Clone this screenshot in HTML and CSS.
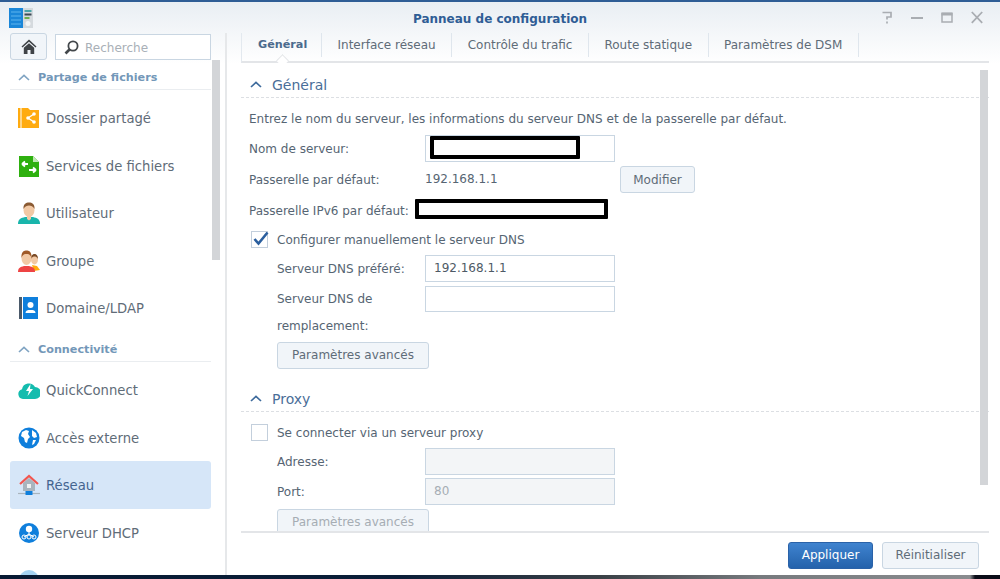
FILE: index.html
```html
<!DOCTYPE html>
<html lang="fr">
<head>
  <meta charset="UTF-8" />
  <title>Panneau de configuration</title>
  <link rel="stylesheet" href="styles.css">
</head>
<body>

<div class="window">
  <div class="titlebar">
    <svg class="app-icon" width="24" height="20" viewBox="0 0 24 20">
      <rect x="0" y="0" width="14" height="20" fill="#1a86d8"/>
      <path d="M2 4h10M2 8h10M2 12h10M2 16h10" stroke="#5cb4ee" stroke-width="1"/>
      <rect x="14" y="0" width="10" height="20" fill="#d5dade"/>
      <rect x="15.500" y="2" width="7" height="2" fill="#4aa3a8"/>
      <rect x="15.500" y="5.500" width="7" height="2" fill="#3d4a55"/>
      <rect x="15.500" y="9" width="5" height="2" fill="#6dad4e"/>
      <circle cx="19" cy="15.500" r="2.500" fill="#f4f6f7"/>
    </svg>
    <div class="title">Panneau de configuration</div>
    <div class="win-buttons">
      <svg width="12" height="13" viewBox="0 0 12 13"><path d="M1.500 1.500h8.500v4.500h-4v2.500M6 10.500v2" fill="none" stroke="#a9adb2" stroke-width="1.700"/></svg>
      <svg width="12" height="13" viewBox="0 0 12 13"><path d="M0 7h12" stroke="#a9adb2" stroke-width="2"/></svg>
      <svg width="12" height="13" viewBox="0 0 12 13"><path d="M1 2.500h10v8.500h-10z" fill="none" stroke="#a9adb2" stroke-width="1.500"/><rect x="0.500" y="1.500" width="11" height="3" fill="#a9adb2"/></svg>
      <svg width="12" height="13" viewBox="0 0 12 13"><path d="M0.800 1l10.400 10.800M11.200 1l-10.400 10.800" stroke="#a9adb2" stroke-width="1.800"/></svg>
    </div>
  </div>

  <div class="panels">
    <div class="sidebar">
      <div class="search-row">
        <div class="home-btn">
          <svg width="16" height="15" viewBox="0 0 16 15"><path d="M8 0.500L0.500 7.500l1 1L8 2.800l6.500 5.700 1-1z" fill="#3f4347"/><path d="M2.800 8.800L8 4.200l5.200 4.600V15H9.500v-4h-3v4H2.800z" fill="#3f4347"/></svg>
        </div>
        <div class="search">
          <svg width="15" height="15" viewBox="0 0 15 15"><circle cx="9" cy="6" r="4.600" fill="none" stroke="#43474b" stroke-width="1.800"/><path d="M5.500 9.500L1.500 13.500" stroke="#43474b" stroke-width="2.600"/></svg>
          <span>Recherche</span>
        </div>
      </div>

      <div class="menu">
        <div class="menu-head">
          <svg class="chev" width="12" height="7" viewBox="0 0 12 7"><path d="M1 6l5-4.700L11 6" fill="none" stroke="#7fa3c2" stroke-width="1.600"/></svg>
          Partage de fichiers
        </div>
        <div class="menu-item">
          <svg width="22" height="20" viewBox="0 0 22 20"><path d="M0 0h10l2 2h9v18H0z" fill="#ffab10"/><path d="M3 0v20" stroke="#fff" stroke-width="1"/><path d="M16 6l-6 4 6 4" fill="none" stroke="#fff" stroke-width="1.300"/><circle cx="16" cy="6" r="1.800" fill="#fff"/><circle cx="10" cy="10" r="1.800" fill="#fff"/><circle cx="16" cy="14" r="1.800" fill="#fff"/></svg>
          <span>Dossier partagé</span>
        </div>
        <div class="menu-item">
          <svg width="22" height="22" viewBox="0 0 22 22"><path d="M1 1h14l6 6v15H1z" fill="#2eb00f"/><path d="M15 1l6 6h-6z" fill="#bfe8b3"/><path d="M4 9h6M4 9l3-2.500M4 9l3 2.500M18 15h-7M18 15l-3-2.500M18 15l-3 2.500" fill="none" stroke="#fff" stroke-width="1.800"/></svg>
          <span>Services de fichiers</span>
        </div>
        <div class="menu-item">
          <svg width="22" height="22" viewBox="0 0 22 22"><path d="M0 22c0-5 3-6 7-7h8c4 1 7 2 7 7z" fill="#19b5ab"/><ellipse cx="11" cy="8" rx="5.500" ry="7" fill="#f2c9a5"/><path d="M9 13h4v4l-2 1.500L9 17z" fill="#f2c9a5"/><path d="M5.500 7C5 2 8 0.500 11 0.500S17 2 16.500 7C15 4 13 3.500 11 3.500S7 4 5.500 7z" fill="#8a5a32"/></svg>
          <span>Utilisateur</span>
        </div>
        <div class="menu-item">
          <svg width="22" height="22" viewBox="0 0 22 22"><path d="M14 15l5 1 3 4-6 1z" fill="#ffab10"/><ellipse cx="16.500" cy="9.500" rx="3.500" ry="5" fill="#f2c9a5"/><path d="M13 9c0-4 2-5 3.500-5S20 5 20 9c-1-2-2.500-2.500-3.500-2.500S14 7 13 9z" fill="#7a4b28"/><path d="M0 22c0-4 2-5 6-6h5c4 1 6 2 6 6z" fill="#ee4444"/><ellipse cx="8.500" cy="8" rx="5" ry="7" fill="#f2c9a5"/><path d="M3.500 8C3 2 6 0.500 8.500 0.500S14 2 13.500 8C12.500 4.500 10.500 4 8.500 4S4.500 4.500 3.500 8z" fill="#a05a28"/></svg>
          <span>Groupe</span>
        </div>
        <div class="menu-item">
          <svg width="22" height="22" viewBox="0 0 22 22"><rect x="1" y="0" width="3" height="22" fill="#4b5a6a"/><rect x="4" y="0" width="1" height="22" fill="#fff"/><rect x="5" y="0" width="15" height="22" fill="#0f7fdc"/><circle cx="12.500" cy="8" r="3" fill="#fff"/><path d="M7.500 16c0-2.500 2-3 5-3s5 .5 5 3z" fill="#fff"/></svg>
          <span>Domaine/LDAP</span>
        </div>
        <div class="menu-head second">
          <svg class="chev" width="12" height="7" viewBox="0 0 12 7"><path d="M1 6l5-4.700L11 6" fill="none" stroke="#7fa3c2" stroke-width="1.600"/></svg>
          Connectivité
        </div>
        <div class="menu-item">
          <svg width="22" height="18" viewBox="0 0 22 18"><path d="M5 18a5 5 0 0 1-1-9.800A7 7 0 0 1 17 6a6 6 0 0 1 0 12z" fill="#14bcae"/><path d="M12.500 3L8 10h3l-1.500 5L15 8h-3z" fill="#fff"/></svg>
          <span>QuickConnect</span>
        </div>
        <div class="menu-item">
          <svg width="22" height="22" viewBox="0 0 22 22"><circle cx="11" cy="11" r="10.500" fill="#0f7fdc"/><path d="M4 5l4-2 3 1-1 3 2 3-2 2-1 4-2-1-1-4-3-2zM14 3l4 3 1 4-3 1-2-2zM15 13l3 0-2 4-2 1z" fill="#fff"/></svg>
          <span>Accès externe</span>
        </div>
        <div class="menu-item active">
          <svg width="22" height="22" viewBox="0 0 22 22"><path d="M5 9l6-5 6 5v8H5z" fill="#a9b4bd"/><rect x="9" y="10" width="4" height="4" fill="#eef1f3"/><path d="M2 10l9-8 9 8" fill="none" stroke="#f2554f" stroke-width="2.200"/><path d="M0 19.500h22" stroke="#a9b4bd" stroke-width="1.200"/><rect x="7.500" y="17" width="7" height="4" fill="#0f7fdc"/></svg>
          <span>Réseau</span>
        </div>
        <div class="menu-item">
          <svg width="22" height="22" viewBox="0 0 22 22"><circle cx="11" cy="11" r="10" fill="#0f7fdc"/><circle cx="11" cy="7" r="3.200" fill="#fff"/><path d="M11 10v3M6 15l5-3 5 3" stroke="#fff" stroke-width="1" fill="none"/><circle cx="6" cy="15" r="2" fill="none" stroke="#fff"/><circle cx="11" cy="15" r="2" fill="none" stroke="#fff"/><circle cx="16" cy="15" r="2" fill="none" stroke="#fff"/></svg>
          <span>Serveur DHCP</span>
        </div>
        <div class="menu-item">
          <svg width="22" height="22" viewBox="0 0 22 22"><circle cx="11" cy="11" r="10" fill="#a5d3f2"/></svg>
          <span></span>
        </div>
      </div>
      <div class="scrollbar side-scroll"></div>
    </div>

    <div class="main">
      <div class="tabs">
        <div class="tab active">Général</div>
        <div class="tab">Interface réseau</div>
        <div class="tab">Contrôle du trafic</div>
        <div class="tab">Route statique</div>
        <div class="tab">Paramètres de DSM</div>
      </div>

      <div class="content">
        <div class="section-head">
          <svg width="12" height="7" viewBox="0 0 12 7"><path d="M1 6l5-4.700L11 6" fill="none" stroke="#3d6a9c" stroke-width="1.700"/></svg>
          Général
        </div>
        <p class="desc">Entrez le nom du serveur, les informations du serveur DNS et de la passerelle par défaut.</p>

        <div class="row">
          <label class="lbl">Nom de serveur:</label>
          <div class="input redacted-host"><i class="redact host-box"></i></div>
        </div>
        <div class="row">
          <label class="lbl">Passerelle par défaut:</label>
          <span class="value">192.168.1.1</span>
          <div class="btn modify">Modifier</div>
        </div>
        <div class="row ipv6">
          <label class="lbl">Passerelle IPv6 par défaut:</label>
          <i class="redact ipv6-box"></i>
        </div>
        <div class="row check-row">
          <svg class="check" width="18" height="18" viewBox="0 0 18 18"><rect x="0.500" y="0.500" width="16" height="16" fill="#fff" stroke="#c3cfdc"/><path d="M3.500 8l4 4.500L16.500 1.500" fill="none" stroke="#2a5e9e" stroke-width="2.600"/></svg>
          Configurer manuellement le serveur DNS
        </div>
        <div class="row sub">
          <label class="lbl">Serveur DNS préféré:</label>
          <div class="input">192.168.1.1</div>
        </div>
        <div class="row sub tall">
          <label class="lbl">Serveur DNS de remplacement:</label>
          <div class="input"></div>
        </div>
        <div class="row sub advanced">
          <div class="btn wide">Paramètres avancés</div>
        </div>

        <div class="section-head proxy">
          <svg width="12" height="7" viewBox="0 0 12 7"><path d="M1 6l5-4.700L11 6" fill="none" stroke="#3d6a9c" stroke-width="1.700"/></svg>
          Proxy
        </div>
        <div class="row check-row proxy-check">
          <svg class="check" width="18" height="18" viewBox="0 0 18 18"><rect x="0.500" y="0.500" width="16" height="16" fill="#fff" stroke="#c3cfdc"/></svg>
          Se connecter via un serveur proxy
        </div>
        <div class="row sub tight">
          <label class="lbl">Adresse:</label>
          <div class="input disabled"></div>
        </div>
        <div class="row sub tight2">
          <label class="lbl">Port:</label>
          <div class="input disabled">80</div>
        </div>
        <div class="row sub">
          <div class="btn wide disabled-btn">Paramètres avancés</div>
        </div>
        <div class="scrollbar main-scroll"></div>
      </div>

      <div class="footer">
        <div class="btn primary">Appliquer</div>
        <div class="btn reset">Réinitialiser</div>
      </div>
    </div>
  </div>
</div>
<div class="wallpaper"></div>

</body>
</html>
```

FILE: styles.css
```css
html, body {
  margin: 0;
  padding: 0;
  height: 579px;
  overflow: hidden;
}

body {
  font-family: "DejaVu Sans", sans-serif;
  font-size: 12px;
  color: #566573;
  background-color: #fff;
}

.window {
  height: 575px;
  display: flex;
  flex-direction: column;
  border-top: 2px solid #2f5d95;
  box-sizing: border-box;
  overflow: hidden;
  background: linear-gradient(#e9eef3 0, #fff 62px) no-repeat;
}

.wallpaper {
  height: 4px;
  background: linear-gradient(90deg, #071a33 0%, #0b1e38 40%, #3a4046 60%, #777a7e 76%, #8a8c8f 97%, #0a0d18 97.500%);
}

.titlebar {
  height: 31px;
  flex-shrink: 0;
  position: relative;
  display: flex;
  align-items: center;
  justify-content: center;
}

.app-icon {
  position: absolute;
  left: 9px;
  top: 6px;
}

.title {
  font-weight: bold;
  font-size: 12px;
  color: #2f5d95;
  margin-top: 2px;
}

.win-buttons {
  position: absolute;
  right: 17px;
  top: 9px;
  display: flex;
  gap: 18px;
}

.panels {
  flex: 1;
  display: flex;
  min-height: 0;
}

/* left menu */
.sidebar {
  width: 227px;
  flex-shrink: 0;
  position: relative;
  box-sizing: border-box;
  border-right: 2px solid #e6e8ea;
  overflow: hidden;
}

.search-row {
  display: flex;
  gap: 8px;
  padding-left: 10px;
}

.home-btn {
  width: 37px;
  height: 27px;
  display: flex;
  align-items: center;
  justify-content: center;
  border: 1px solid #c9d6e2;
  border-radius: 3px;
  background-color: #f1f5f9;
  box-sizing: border-box;
}

.search {
  width: 156px;
  height: 26px;
  margin-top: 1px;
  box-sizing: border-box;
  border: 1px solid #c9d6e2;
  background-color: #fff;
  display: flex;
  align-items: center;
  gap: 6px;
  padding: 1px 0 0 8px;
  color: #a9b0b7;
}

.menu {
  width: 201px;
  margin-left: 10px;
}

.menu-head {
  height: 30px;
  box-sizing: border-box;
  padding: 5px 0 0 8px;
  display: flex;
  align-items: center;
  gap: 8px;
  border-bottom: 1px solid #eaedf0;
  font-weight: bold;
  font-size: 11.200px;
  color: #7397b8;
  margin-bottom: 4px;
}

.menu-head.second {
  margin-top: 0.500px;
}

.menu-item {
  height: 47.500px;
  box-sizing: border-box;
  display: flex;
  align-items: center;
  font-size: 13.200px;
  color: #5f6c78;
  border-radius: 3px;
  padding: 1px 0 0 8px;
  position: relative;
}

.menu-item svg {
  width: 22px;
  flex-shrink: 0;
}

.menu-item span {
  margin-left: 6px;
  margin-top: 1px;
}

.menu-item.active {
  background-color: #d6e6f8;
  color: #44648f;
}

.scrollbar {
  position: absolute;
  width: 8px;
  background-color: #d3d5d8;
}

.side-scroll {
  left: 212px;
  top: 27px;
  height: 200px;
}

/* right panel */
.main {
  flex: 1;
  display: flex;
  flex-direction: column;
  min-width: 0;
  padding-left: 14px;
  padding-right: 11px;
}

.tabs {
  height: 30px;
  flex-shrink: 0;
  display: flex;
  box-sizing: border-box;
  border-bottom: 2px solid #e3e5e8;
  position: relative;
  border-left: 1px solid #e3e9ef;
}

.tab {
  height: 24px;
  line-height: 24px;
  padding: 0 15.500px;
  color: #5f6c78;
  border-right: 1px solid #dfe6ed;
}

.tab.active {
  width: 80px;
  box-sizing: border-box;
  font-weight: bold;
  font-size: 11.200px;
  padding: 0 0 0 16px;
  color: #4b6a8d;
  position: relative;
}

.tab.active::after {
  content: "";
  position: absolute;
  left: 36px;
  top: 23px;
  width: 8px;
  height: 8px;
  background-color: #fff;
  border-left: 1px solid #e3e5e8;
  border-top: 1px solid #e3e5e8;
  transform: rotate(45deg);
}

.content {
  flex: 1;
  min-height: 0;
  position: relative;
  overflow: hidden;
}

.main-scroll {
  right: 1px;
  top: 7px;
  height: 415px;
}

.section-head {
  height: 35px;
  box-sizing: border-box;
  padding: 13px 0 4px 9px;
  display: flex;
  align-items: center;
  gap: 10px;
  font-size: 14px;
  color: #4a6e98;
  border-bottom: 1px dashed #dcdfe3;
}

.section-head.proxy {
  margin-top: 8px;
}

.desc {
  margin: 10px 0 0 8px;
  line-height: 22px;
  height: 22px;
  white-space: nowrap;
}

.row {
  display: flex;
  align-items: center;
  height: 27px;
  margin-top: 4px;
  margin-left: 8px;
  position: relative;
  white-space: nowrap;
}

.desc + .row {
  margin-top: 5px;
}

.lbl {
  width: 176px;
  flex-shrink: 0;
}

.sub {
  margin-left: 36px;
}

.sub .lbl {
  width: 148px;
}

.check-row {
  margin-top: 2px;
  margin-left: 10px;
  gap: 8px;
}

.check-row + .sub {
  margin-top: 2px;
}

.proxy-check {
  margin-top: 7px;
}

.row.tight {
  margin-top: 2px;
}

.row.tight2 {
  margin-top: 3px;
}

.sub.tall {
  align-items: flex-start;
  height: 53px;
}

.sub.tall .lbl {
  white-space: normal;
  line-height: 27px;
  width: 130px;
  margin-right: 18px;
}

.sub.tall .input {
  height: 26px;
}

.sub.advanced {
  margin-top: 3px;
}

.input {
  width: 190px;
  height: 27px;
  box-sizing: border-box;
  border: 1px solid #c9d6e2;
  background-color: #fff;
  padding: 0 8px;
  line-height: 25px;
  color: #4e5a66;
  position: relative;
}

.input.disabled {
  background-color: #f3f5f7;
  color: #a6adb4;
}

.value {
  width: 195px;
  flex-shrink: 0;
  margin-top: -2px;
}

.btn {
  box-sizing: border-box;
  height: 27px;
  line-height: 25px;
  padding: 0 13px;
  border: 1px solid #c9d6e2;
  border-radius: 3px;
  background-color: #f1f5f9;
  color: #5f6c78;
  text-align: center;
}

.btn.wide {
  width: 152px;
  padding: 0;
}

.disabled-btn {
  color: #a6adb4;
}

.modify {
  width: 75px;
  padding: 0;
  line-height: 26px;
}

.redact {
  position: absolute;
  box-sizing: border-box;
  background-color: #fff;
  border: 4px solid #000;
  border-radius: 1px;
}

.host-box {
  left: 4px;
  top: 0;
  width: 150px;
  height: 23px;
}

.ipv6-box {
  left: 166px;
  top: 2px;
  width: 193px;
  height: 20px;
}

.footer {
  height: 44px;
  flex-shrink: 0;
  box-sizing: border-box;
  border-top: 2px solid #e3e5e8;
  padding: 9px 10px 0 0;
  display: flex;
  justify-content: flex-end;
  gap: 9px;
}

.primary {
  width: 85px;
  padding: 0;
  color: #fff;
  border-color: #2a62a8;
  background: linear-gradient(#3f83cf, #2462ab);
}

.reset {
  width: 97px;
  padding: 0;
}
```
